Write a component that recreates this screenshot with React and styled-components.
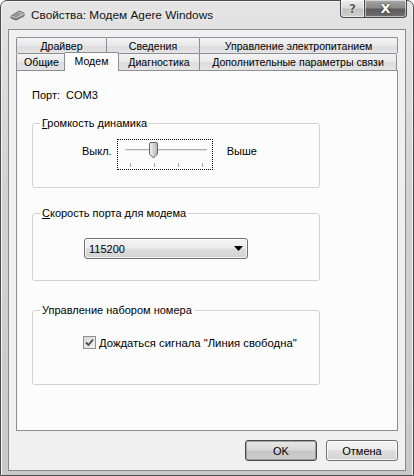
import React from "react";
import styled, { createGlobalStyle } from "styled-components";

const Global = createGlobalStyle`
  html, body { margin: 0; padding: 0; background: #fff; }
  body { font-family: "Liberation Sans", Arial, sans-serif; }
`;

const Window = styled.div`
  box-sizing: border-box;
  width: 414px;
  height: 476px;
  display: flex;
  flex-direction: column;
  padding: 0 7px 4px 7px;
  border: 1px solid #4c4c4c;
  border-radius: 7px 7px 0 0;
  background: linear-gradient(180deg, #e4e4e4 0%, #d2d2d2 40%, #c9c9c9 100%);
  box-shadow: inset 1px 1px 0 #f4f4f4, inset -1px 0 0 #f0f0f0;
`;

const TitleBar = styled.div`
  height: 28px;
  margin: 0 -7px;
  padding: 0 6px 0 9px;
  display: flex;
  align-items: flex-start;
`;

const TitleLeft = styled.div`
  display: flex;
  align-items: center;
  height: 28px;
  gap: 6px;
  flex: 1;
`;

const TitleText = styled.span`
  font-size: 11.8px;
  color: #111;
  text-shadow: 0 0 6px #f2f2f2;
`;

const CaptionButtons = styled.div`
  display: flex;
  margin-top: -1px;
`;

const CaptionButton = styled.div`
  box-sizing: border-box;
  height: 18px;
  width: ${(p) => p.$w}px;
  display: flex;
  align-items: center;
  justify-content: center;
  border: 1px solid #4a4a4a;
  border-top: none;
  font-family: "DejaVu Sans", sans-serif;
  font-weight: bold;
  font-size: ${(p) => (p.$close ? 13 : 12)}px;
  color: ${(p) => (p.$close ? "#fff" : "#5a5a5a")};
  text-shadow: ${(p) =>
    p.$close
      ? "0 0 1px #333, 0 0 2px #333"
      : "0 0 1px #fff, 0 0 2px #fff"};
  background: ${(p) =>
    p.$close
      ? "linear-gradient(180deg, #a8a8a8 0%, #8a8a8a 45%, #5c5c5c 55%, #6e6e6e 100%)"
      : "linear-gradient(180deg, #eeeeee 0%, #dadada 45%, #c2c2c2 55%, #d0d0d0 100%)"};
  border-radius: ${(p) => (p.$close ? "0 0 4px 0" : "0 0 0 4px")};
  border-left: ${(p) => (p.$close ? "none" : "1px solid #4a4a4a")};
  box-shadow: inset 0 0 0 1px rgba(255, 255, 255, 0.55);
`;

const Client = styled.div`
  flex: 1;
  display: flex;
  flex-direction: column;
  background: #f0f0f0;
  border: 1px solid #8a8a8a;
  padding: 7px 7px 9px 7px;
  min-height: 0;
`;

const TabRows = styled.div`
  display: flex;
  flex-direction: column;
`;

const TabRow = styled.div`
  display: flex;
  height: ${(p) => p.$h}px;
  align-items: flex-end;
`;

const Tab = styled.div`
  box-sizing: border-box;
  width: ${(p) => p.$w}px;
  height: 100%;
  margin-right: -1px;
  display: flex;
  align-items: center;
  justify-content: center;
  font-size: 10.6px;
  color: #000;
  border: 1px solid #8c8e94;
  border-bottom: none;
  border-radius: 2px 2px 0 0;
  background: linear-gradient(180deg, #f3f3f3 0%, #e9e9e9 50%, #dcdcdc 51%, #e4e4e4 100%);
  white-space: nowrap;
`;

const ActiveTab = styled(Tab)`
  position: relative;
  z-index: 1;
  height: 19px;
  margin: 0 -1px -1px -2px;
  padding-bottom: 3px;
  width: ${(p) => p.$w + 3}px;
  background: #fcfcfc;
`;

const Panel = styled.div`
  flex: 1;
  display: flex;
  flex-direction: column;
  align-items: flex-start;
  background: #fcfcfc;
  border: 1px solid #8c8e94;
  padding: 0 15px;
  margin-bottom: 9px;
`;

const PortLine = styled.div`
  margin-top: 17px;
  font-size: 11px;
  line-height: 14px;
  color: #000;
  white-space: pre;
`;

const Group = styled.div`
  box-sizing: border-box;
  position: relative;
  width: 288px;
  height: ${(p) => p.$h}px;
  margin-top: ${(p) => p.$mt}px;
  border: 1px solid #d2d2d2;
  border-radius: 3px;
  box-shadow: inset 1px 1px 0 #fff;
  display: flex;
  align-items: flex-start;
  padding: ${(p) => p.$pad};
`;

const Legend = styled.span`
  position: absolute;
  top: -8px;
  left: 7px;
  padding: 0 2px;
  font-size: 11px;
  line-height: 14px;
  color: #000;
  background: #fcfcfc;
  white-space: nowrap;
`;

const Label = styled.span`
  font-size: 11px;
  line-height: 14px;
  color: #000;
  margin-top: 5px;
  white-space: nowrap;
`;

const SliderFocus = styled.div`
  width: 96px;
  height: 31px;
  box-sizing: border-box;
  border: 1px dotted #000;
  margin: 0 14px 0 5px;
  display: flex;
`;

const Combo = styled.div`
  box-sizing: border-box;
  width: 164px;
  height: 21px;
  border: 1px solid #6f6f6f;
  border-radius: 3px;
  display: flex;
  align-items: center;
  justify-content: space-between;
  padding: 0 4px 0 4px;
  font-size: 11px;
  color: #000;
  background: linear-gradient(180deg, #f4f4f4 0%, #ebebeb 45%, #dcdcdc 55%, #d2d2d2 100%);
  box-shadow: inset 0 0 0 1px rgba(255, 255, 255, 0.7);
`;

const CheckRow = styled.label`
  display: flex;
  align-items: center;
  gap: 3px;
  font-size: 11.3px;
  color: #000;
  white-space: nowrap;
`;

const CheckBox = styled.span`
  box-sizing: border-box;
  width: 13px;
  height: 13px;
  border: 1px solid #8e8f8f;
  background: linear-gradient(135deg, #d8d8d8 0%, #f2f2f2 100%);
  display: flex;
  align-items: center;
  justify-content: center;
`;

const ButtonRow = styled.div`
  display: flex;
  justify-content: flex-end;
  gap: 9px;
`;

const Button = styled.button`
  box-sizing: border-box;
  width: 72px;
  height: 21px;
  padding: 0;
  font-family: "Liberation Sans", Arial, sans-serif;
  font-size: 11px;
  color: #000;
  border: 1px solid ${(p) => (p.$default ? "#4a4a4a" : "#707070")};
  border-radius: 3px;
  background: ${(p) =>
    p.$default
      ? "linear-gradient(180deg, #e6e6e6 0%, #dadada 45%, #c6c6c6 55%, #cdcdcd 100%)"
      : "linear-gradient(180deg, #f4f4f4 0%, #ececec 45%, #dddddd 55%, #d4d4d4 100%)"};
  box-shadow: inset 0 0 0 1px ${(p) => (p.$default ? "rgba(120,120,120,0.6)" : "rgba(255,255,255,0.8)")};
`;

function TitleIcon() {
  return (
    <svg width="15" height="12" viewBox="0 0 15 12">
      <defs>
        <linearGradient id="mi" x1="0" y1="0" x2="0" y2="1">
          <stop offset="0" stopColor="#c8c8c8" />
          <stop offset="1" stopColor="#6a6a6a" />
        </linearGradient>
      </defs>
      <path d="M1 7 L9 2 L14 4 L14 7 L6 11 L1 9 Z" fill="url(#mi)" stroke="#555" strokeWidth="0.8" />
      <path d="M1 7 L6 9 L14 4.5" fill="none" stroke="#ddd" strokeWidth="0.8" />
      <ellipse cx="8" cy="5" rx="2.5" ry="1.2" fill="#999" />
    </svg>
  );
}

function Slider() {
  return (
    <svg width="94" height="29" viewBox="1 1 94 29">
      <defs>
        <linearGradient id="th" x1="0" y1="0" x2="1" y2="0">
          <stop offset="0" stopColor="#f4f4f4" />
          <stop offset="1" stopColor="#b4b4b4" />
        </linearGradient>
      </defs>
      <rect x="8" y="10" width="82" height="1" fill="#b0b0b0" />
      <rect x="8" y="11" width="82" height="1" fill="#e4e4e4" />
      {[13, 37, 61, 85].map((x) => (
        <line key={x} x1={x + 0.5} y1="24" x2={x + 0.5} y2="28" stroke="#a8a8a8" />
      ))}
      <path
        d="M32.5 5 Q32.5 3.5 34 3.5 H39 Q40.5 3.5 40.5 5 V15 L36.5 19 L32.5 15 Z"
        fill="url(#th)"
        stroke="#666"
      />
    </svg>
  );
}

export default function App() {
  return (
    <>
      <Global />
      <Window>
        <TitleBar>
          <TitleLeft>
            <TitleIcon />
            <TitleText>Свойства: Модем Agere Windows</TitleText>
          </TitleLeft>
          <CaptionButtons>
            <CaptionButton $w={25}>?</CaptionButton>
            <CaptionButton $w={42} $close>
              X
            </CaptionButton>
          </CaptionButtons>
        </TitleBar>
        <Client>
          <TabRows>
            <TabRow $h={16}>
              <Tab $w={91}>Драйвер</Tab>
              <Tab $w={94}>Сведения</Tab>
              <Tab $w={199}>Управление электропитанием</Tab>
            </TabRow>
            <TabRow $h={17}>
              <Tab $w={51}>Общие</Tab>
              <ActiveTab $w={52}>Модем</ActiveTab>
              <Tab $w={82}>Диагностика</Tab>
              <Tab $w={198}>Дополнительные параметры связи</Tab>
            </TabRow>
          </TabRows>
          <Panel>
            <PortLine>{"Порт:\u00a0 COM3"}</PortLine>
            <Group $h={65} $mt={21} $pad="15px 0 0 49px">
              <Legend>
                <u>Г</u>ромкость динамика
              </Legend>
              <Label>Выкл.</Label>
              <SliderFocus>
                <Slider />
              </SliderFocus>
              <Label>Выше</Label>
            </Group>
            <Group $h={68} $mt={25} $pad="24px 0 0 51px">
              <Legend>
                <u>С</u>корость порта для модема
              </Legend>
              <Combo>
                <span>115200</span>
                <svg width="9" height="5" viewBox="0 0 9 5">
                  <path d="M0 0 H9 L4.5 5 Z" fill="#000" />
                </svg>
              </Combo>
            </Group>
            <Group $h={75} $mt={29} $pad="25px 0 0 50px">
              <Legend>Управление набором номера</Legend>
              <CheckRow>
                <CheckBox>
                  <svg width="9" height="9" viewBox="0 0 9 9">
                    <path d="M1 4.5 L3.5 7 L8 1.5" fill="none" stroke="#4a4a4a" strokeWidth="1.8" />
                  </svg>
                </CheckBox>
                <span>
                  <u>Д</u>ождаться сигнала "Линия свободна"
                </span>
              </CheckRow>
            </Group>
          </Panel>
          <ButtonRow>
            <Button $default>OK</Button>
            <Button>Отмена</Button>
          </ButtonRow>
        </Client>
      </Window>
    </>
  );
}
